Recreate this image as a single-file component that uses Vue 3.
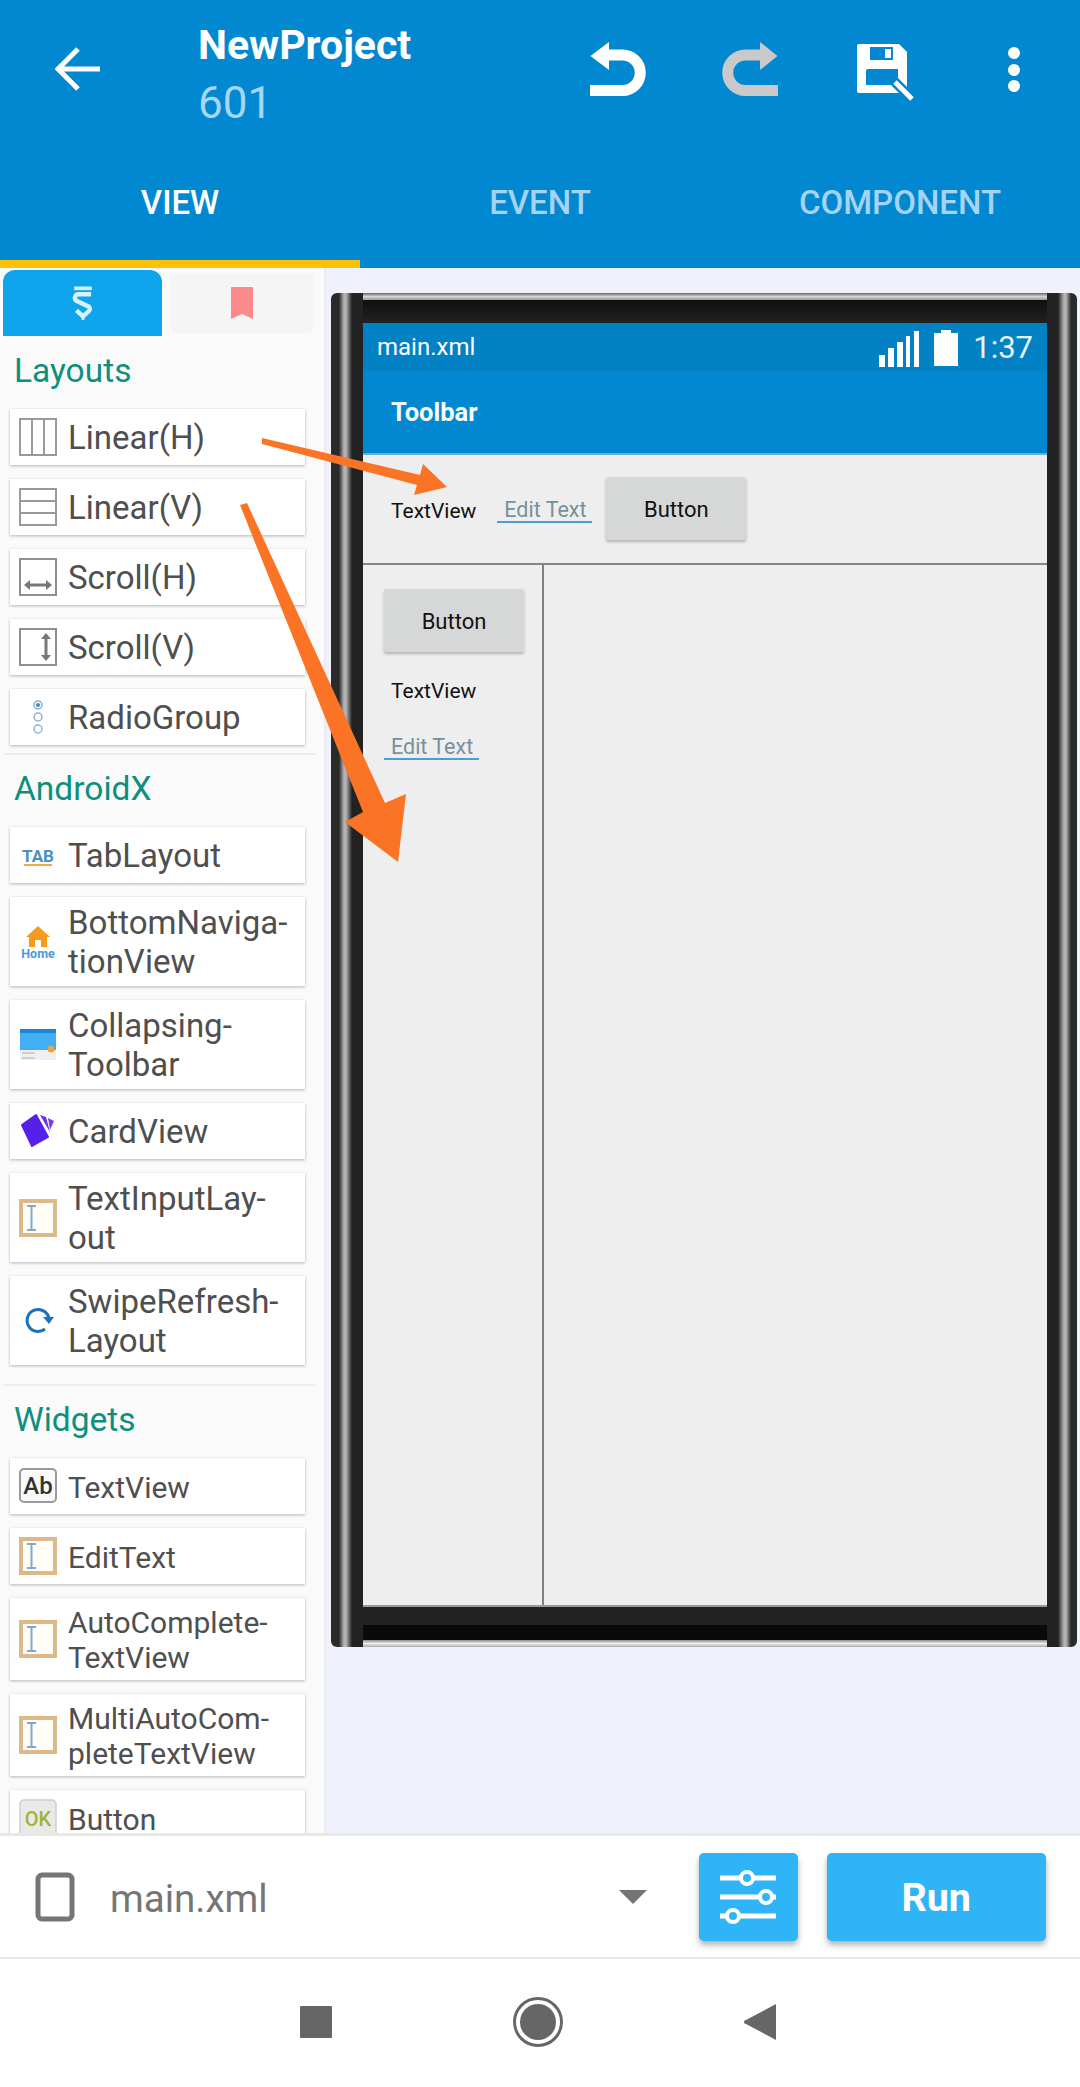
<script setup>
// palette sections, labels carry their own line break like the original hyphenation
const sections = [
  {
    title: 'Layouts',
    items: [
      { icon: 'linearh', lines: ['Linear(H)'] },
      { icon: 'linearv', lines: ['Linear(V)'] },
      { icon: 'scrollh', lines: ['Scroll(H)'] },
      { icon: 'scrollv', lines: ['Scroll(V)'] },
      { icon: 'radio', lines: ['RadioGroup'] },
    ],
  },
  {
    title: 'AndroidX',
    items: [
      { icon: 'tab', lines: ['TabLayout'] },
      { icon: 'home', lines: ['BottomNaviga-', 'tionView'] },
      { icon: 'collapse', lines: ['Collapsing-', 'Toolbar'] },
      { icon: 'card', lines: ['CardView'] },
      { icon: 'edit', lines: ['TextInputLay-', 'out'] },
      { icon: 'swipe', lines: ['SwipeRefresh-', 'Layout'] },
    ],
  },
  {
    title: 'Widgets',
    small: true,
    items: [
      { icon: 'text', lines: ['TextView'] },
      { icon: 'edit', lines: ['EditText'] },
      { icon: 'edit', lines: ['AutoComplete-', 'TextView'] },
      { icon: 'edit', lines: ['MultiAutoCom-', 'pleteTextView'] },
      { icon: 'ok', lines: ['Button'] },
    ],
  },
]

const tabs = ['VIEW', 'EVENT', 'COMPONENT']
</script>

<template>
  <div class="app">
    <header class="header">
      <div class="topbar">
        <svg class="back" width="46" height="46" viewBox="0 0 46 46">
          <path d="M45 23H3M23 3 3 23l20 20" fill="none" stroke="#fff" stroke-width="5" />
        </svg>
        <div class="title-block">
          <div class="title">NewProject</div>
          <div class="subtitle">601</div>
        </div>
        <div class="actions">
          <svg width="60" height="60" viewBox="18 10 60 60">
            <path d="M20 60.5H52.5A17.75 17.75 0 0 0 52.5 25H36" fill="none" stroke="#fff" stroke-width="11" />
            <path d="M20.5 26 39 12V40Z" fill="#fff" />
          </svg>
          <svg class="redo" width="60" height="60" viewBox="18 10 60 60">
            <path d="M76 60.5H43.5A17.75 17.75 0 0 1 43.5 25H60" fill="none" stroke="#c9c9c9" stroke-width="11" />
            <path d="M75.5 26 58 12V40Z" fill="#c9c9c9" />
          </svg>
          <svg class="save" width="62" height="62" viewBox="0 0 62 62">
            <path d="M3 1H43L51 9V48a2 2 0 0 1-2 2H3a2 2 0 0 1-2-2V3a2 2 0 0 1 2-2Z" fill="#fff" />
            <path d="M14 4H37V17H14Z" fill="#0288d1" />
            <path d="M29 6H35V15H29Z" fill="#fff" />
            <path d="M10 28a2 2 0 0 1 2-2H42V42H10Z" fill="#0288d1" />
            <path d="M36 36 60 60" stroke="#0288d1" stroke-width="10" />
            <path d="M39 39 56 56" stroke="#fff" stroke-width="5" />
          </svg>
          <div class="dots"><i></i><i></i><i></i></div>
        </div>
      </div>
      <nav class="tabs">
        <div v-for="(t, i) in tabs" :key="t" class="tab" :class="{ 'tab--on': i === 0 }">{{ t }}</div>
      </nav>
    </header>

    <main class="main">
      <aside class="palette">
        <div class="palette-tabs">
          <div class="ptab ptab--on">
            <svg width="22" height="38" viewBox="0 0 30 46">
              <path d="M3 3H27" stroke="#d4eefc" stroke-width="5" />
              <path d="M26 11H9a5 5 0 0 0-3 9L23 28a4 4 0 0 1 0 6L15 41 6 33" fill="none" stroke="#d9f0fd" stroke-width="6" />
              <path d="M15 46V40" stroke="#d9f0fd" stroke-width="4" />
            </svg>
          </div>
          <div class="ptab ptab--off">
            <svg width="24" height="32" viewBox="0 0 24 32">
              <path d="M2 0H22a1 1 0 0 1 1 1V32L12 27 1 32V1a1 1 0 0 1 1-1Z" fill="#fb8a8a" />
            </svg>
          </div>
        </div>

        <section
          v-for="(sec, si) in sections"
          :key="sec.title"
          class="section"
          :class="{ 'section--small': sec.small, 'section--divided': si > 0 }"
        >
          <h2 class="section-title">{{ sec.title }}</h2>
          <div class="items">
            <div v-for="item in sec.items" :key="item.lines[0]" class="item">
              <svg class="item-icon" width="38" height="38" viewBox="0 0 38 38">
                <template v-if="item.icon === 'linearh'">
                  <path d="M1 1H37V37H1ZM13 1V37M25 1V37" fill="none" stroke="#9a9a9a" stroke-width="2" />
                </template>
                <template v-else-if="item.icon === 'linearv'">
                  <path d="M1 1H37V37H1ZM1 13H37M1 25H37" fill="none" stroke="#9a9a9a" stroke-width="2" />
                </template>
                <template v-else-if="item.icon === 'scrollh'">
                  <path d="M1 1H37V37H1Z" fill="none" stroke="#8e8e8e" stroke-width="2" />
                  <path d="M7 27H31" stroke="#777" stroke-width="3" />
                  <path d="M5 27 11 22V32ZM33 27 27 22V32Z" fill="#777" />
                </template>
                <template v-else-if="item.icon === 'scrollv'">
                  <path d="M1 1H37V37H1Z" fill="none" stroke="#8e8e8e" stroke-width="2" />
                  <path d="M27 7V31" stroke="#777" stroke-width="3" />
                  <path d="M27 5 22 11H32ZM27 33 22 27H32Z" fill="#777" />
                </template>
                <template v-else-if="item.icon === 'radio'">
                  <circle cx="19" cy="7" r="4" fill="#fff" stroke="#7fb0d8" stroke-width="1.5" />
                  <circle cx="19" cy="7" r="2" fill="#3d85c6" />
                  <circle cx="19" cy="19" r="4" fill="none" stroke="#8bb4d4" stroke-width="1.5" />
                  <circle cx="19" cy="31" r="4" fill="none" stroke="#8bb4d4" stroke-width="1.5" />
                </template>
                <template v-else-if="item.icon === 'tab'">
                  <text x="19" y="26" text-anchor="middle" class="ic-tab">TAB</text>
                  <path d="M5 29H33" stroke="#f0a94f" stroke-width="2" />
                </template>
                <template v-else-if="item.icon === 'home'">
                  <path d="M19 3 31 14H28V24H22V17H16V24H10V14H7Z" fill="#f79a1e" />
                  <text x="19" y="35" text-anchor="middle" class="ic-home">Home</text>
                </template>
                <template v-else-if="item.icon === 'collapse'">
                  <rect x="1" y="3" width="36" height="4" fill="#1b87d4" />
                  <rect x="1" y="7" width="36" height="17" fill="#42aef5" />
                  <rect x="1" y="24" width="36" height="10" fill="#f0f0f0" />
                  <path d="M3 27H16M3 32H16" stroke="#c4c4c4" stroke-width="1.5" />
                  <circle cx="32" cy="23" r="3.5" fill="#e8a63c" />
                </template>
                <template v-else-if="item.icon === 'card'">
                  <path d="M29 6 35 9 31 18Z" fill="#7a3df0" />
                  <path d="M21 3 27 5 31 20Z" fill="#6a2fee" />
                  <path d="M3 13 17 3 29 25 13 34Z" fill="#5521ea" stroke="#5521ea" stroke-width="2" stroke-linejoin="round" />
                </template>
                <template v-else-if="item.icon === 'edit'">
                  <rect x="2" y="2" width="34" height="34" fill="#fffdf6" stroke="#dcb98a" stroke-width="4" />
                  <path d="M8 7H17M12.5 7V31M8 31H17" fill="none" stroke="#7fa9c9" stroke-width="2" />
                </template>
                <template v-else-if="item.icon === 'swipe'">
                  <path d="M30 17A11 11 0 1 0 26 27" fill="none" stroke="#1e71bf" stroke-width="3" />
                  <path d="M24 15H35L30 22Z" fill="#1e71bf" />
                </template>
                <template v-else-if="item.icon === 'text'">
                  <rect x="1" y="2" width="36" height="33" rx="4" fill="#fafafa" stroke="#9a9a9a" stroke-width="2" />
                  <text x="19" y="27" text-anchor="middle" class="ic-ab">Ab</text>
                </template>
                <template v-else-if="item.icon === 'ok'">
                  <rect x="1" y="1" width="36" height="36" rx="4" fill="#e9e9e6" stroke="#cfcfcf" stroke-width="1.5" />
                  <text x="19" y="27" text-anchor="middle" class="ic-ok">OK</text>
                </template>
              </svg>
              <div class="item-label">
                <div v-for="l in item.lines" :key="l">{{ l }}</div>
              </div>
            </div>
          </div>
        </section>
      </aside>

      <div class="preview">
        <div class="phone">
          <div class="screen">
            <div class="status">
              <span class="status-name">main.xml</span>
              <svg class="signal" width="40" height="36" viewBox="0 0 40 36">
                <path d="M0 24H6V36H0ZM9 17H15V36H9ZM18 11H24V36H18ZM27 5H31V36H27ZM35 0H40V36H35Z" fill="#fff" />
              </svg>
              <svg class="battery" width="24" height="36" viewBox="0 0 24 36">
                <path d="M7 0H17V3H24V36H0V3H7Z" fill="#fff" />
              </svg>
              <span class="clock">1:37</span>
            </div>
            <div class="toolbar">Toolbar</div>
            <div class="hrow">
              <span class="tv">TextView</span>
              <span class="et">Edit Text</span>
              <span class="btn">Button</span>
            </div>
            <div class="body">
              <div class="vcol">
                <span class="btn">Button</span>
                <span class="tv">TextView</span>
                <span class="et">Edit Text</span>
              </div>
            </div>
          </div>
        </div>
      </div>
    </main>

    <div class="bottom">
      <svg class="device" width="40" height="50" viewBox="0 0 40 50">
        <rect x="3" y="3" width="34" height="44" rx="4" fill="none" stroke="#757575" stroke-width="5" />
      </svg>
      <span class="file">main.xml</span>
      <svg class="caret" width="28" height="14" viewBox="0 0 28 14"><path d="M0 0H28L14 14Z" fill="#757575" /></svg>
      <div class="square-btn">
        <svg width="56" height="56" viewBox="0 0 56 56">
          <path d="M0 9H56M0 28H56M0 47H56" stroke="#fff" stroke-width="5" />
          <circle cx="27" cy="9" r="6" fill="#2fb5f7" stroke="#fff" stroke-width="4" />
          <circle cx="46" cy="28" r="6" fill="#2fb5f7" stroke="#fff" stroke-width="4" />
          <circle cx="13" cy="47" r="6" fill="#2fb5f7" stroke="#fff" stroke-width="4" />
        </svg>
      </div>
      <div class="run">Run</div>
    </div>

    <div class="navbar">
      <svg width="32" height="32" viewBox="0 0 32 32"><rect width="32" height="32" rx="1" fill="#666" /></svg>
      <svg width="50" height="50" viewBox="0 0 50 50">
        <circle cx="25" cy="25" r="23.5" fill="none" stroke="#666" stroke-width="3" />
        <circle cx="25" cy="25" r="18" fill="#666" />
      </svg>
      <svg width="32" height="36" viewBox="0 0 32 36"><path d="M32 0V36L2 20a2 2 0 0 1 0-4Z" fill="#666" /></svg>
    </div>

    <!-- annotation arrows drawn over the whole screenshot -->
    <svg class="arrows" width="1080" height="2087" viewBox="0 0 1080 2087">
      <path d="M262 438 262 444 417 485 414 495 447 487 423 464 420 475Z" fill="#fb7325" />
      <path d="M240 505 247 503 385 803 406 794 398 862 345 822 363 812Z" fill="#fb7325" />
    </svg>
  </div>
</template>

<style scoped>
.app {
  position: relative;
  width: 1080px;
  height: 2087px;
  display: flex;
  flex-direction: column;
  overflow: hidden;
  background: #fff;
  font-family: Roboto, "Liberation Sans", sans-serif;
}

.header {
  flex: none;
  height: 268px;
  background: #0288d1;
  color: #fff;
  display: flex;
  flex-direction: column;
}
.topbar {
  height: 158px;
  display: flex;
  align-items: flex-start;
  padding-left: 55px;
}
.back {
  margin-top: 46px;
}
.title-block {
  margin-left: 97px;
  padding-top: 21px;
}
.title {
  font-size: 41px;
  font-weight: 700;
  line-height: 48px;
}
.subtitle {
  font-size: 44px;
  line-height: 50px;
  margin-top: 9px;
  color: #a5d6f5;
}
.actions {
  margin-left: auto;
  display: flex;
  align-items: flex-start;
  padding-top: 40px;
  padding-right: 60px;
}
.redo {
  margin-left: 72px;
}
.save {
  margin-left: 76px;
  margin-top: 3px;
}
.dots {
  margin-left: 90px;
  padding-top: 7px;
  display: flex;
  flex-direction: column;
  gap: 4.5px;
}
.dots i {
  display: block;
  width: 12px;
  height: 12px;
  border-radius: 50%;
  background: #fff;
}
.tabs {
  flex: 1;
  display: flex;
}
.tab {
  flex: 1;
  display: flex;
  align-items: center;
  justify-content: center;
  padding-bottom: 14px;
  font-size: 33px;
  font-weight: 500;
  color: #a5d3f3;
  border-bottom: 8px solid transparent;
}
.tab--on {
  color: #fff;
  border-bottom-color: #ffc107;
}

.main {
  flex: none;
  height: 1565px;
  display: flex;
  overflow: hidden;
}
.palette {
  flex: none;
  width: 324px;
  background: #fafafa;
  border-right: 2px solid #ececec;
  overflow: hidden;
}
.palette-tabs {
  display: flex;
  padding: 2px 0 0 3px;
  height: 68px;
  box-sizing: border-box;
}
.ptab {
  display: flex;
  align-items: center;
  justify-content: center;
}
.ptab--on {
  width: 159px;
  height: 66px;
  background: #0ea5ec;
  border-radius: 12px 12px 0 0;
}
.ptab--off {
  width: 144px;
  height: 60px;
  margin: 3px 0 0 8px;
  background: #f5f5f5;
  border-radius: 6px;
}
.section-title {
  margin: 0;
  height: 73px;
  padding-left: 14px;
  font-size: 33.5px;
  font-weight: 400;
  line-height: 70px;
  color: #0d8f80;
}
.section--divided {
  margin-top: 8px;
  border-top: 2px solid transparent;
  position: relative;
}
.section--divided::before {
  content: "";
  position: absolute;
  top: -2px;
  left: 3px;
  right: 8px;
  height: 2px;
  background: #eeeeee;
}
.section--divided .section-title {
  height: 72px;
  line-height: 68px;
}
.section--small {
  margin-top: 19px;
}
.items {
  display: flex;
  flex-direction: column;
  gap: 14px;
}
.item {
  width: 295px;
  min-height: 56px;
  margin-left: 10px;
  padding: 7px 0 5px;
  box-sizing: border-box;
  display: flex;
  align-items: center;
  gap: 11px;
  background: #fff;
  box-shadow: 0 1px 3px rgba(0, 0, 0, 0.28);
}
.item-icon {
  flex: none;
  margin-left: 9px;
  margin-top: -2px;
}
.item-label {
  font-size: 33px;
  line-height: 38.5px;
  color: #4f4f4f;
}
.section--small .item-label {
  font-size: 30px;
  line-height: 35px;
}
.ic-tab {
  font-size: 17px;
  font-weight: 700;
  fill: #4b8fc0;
}
.ic-home {
  font-size: 12.5px;
  font-weight: 700;
  fill: #4a9ad4;
}
.ic-ab {
  font-size: 24px;
  font-weight: 500;
  fill: #333;
}
.ic-ok {
  font-size: 20px;
  font-weight: 500;
  fill: #9bb53c;
}

.preview {
  flex: 1;
  background: #eff1fd;
  padding: 25px 0 0 5px;
}
.phone {
  width: 746px;
  height: 1354px;
  box-sizing: border-box;
  padding: 30px 30px 40px 32px;
  background:
    linear-gradient(90deg, #2a2a2a 0, #2a2a2a 8px, #b4b4b4 13px, #b4b4b4 15px, #222 21px) left / 32px 100% no-repeat,
    linear-gradient(270deg, #2a2a2a 0, #2a2a2a 6px, #b4b4b4 11px, #b4b4b4 13px, #222 19px) right / 30px 100% no-repeat,
    linear-gradient(#666, #d4d4d4 50%, #999) top / 100% 7px no-repeat,
    linear-gradient(#8a8a8a, #eee 50%, #aaa) bottom / 100% 7px no-repeat,
    linear-gradient(#0a0a0a, #0a0a0a) bottom / 100% 22px no-repeat,
    linear-gradient(#0a0a0a, #222) top / 100% 30px no-repeat,
    #222;
  border-radius: 6px;
}
.screen {
  height: 100%;
  display: flex;
  flex-direction: column;
  background: #eeeeee;
}
.status {
  flex: none;
  height: 48px;
  display: flex;
  align-items: center;
  padding: 0 14px;
  background: #0282c4;
  color: #fff;
}
.status-name {
  font-size: 24px;
  margin-right: auto;
}
.signal {
  margin-top: 4px;
}
.battery {
  margin-left: 15px;
  margin-top: 2px;
}
.clock {
  margin-left: 15px;
  font-size: 31px;
  color: #e8f4fb;
}
.toolbar {
  flex: none;
  height: 84px;
  display: flex;
  align-items: center;
  padding-left: 28px;
  box-sizing: border-box;
  border-bottom: 2px solid #6aaed6;
  background: #0288d1;
  color: #f4fbff;
  font-size: 25.5px;
  font-weight: 700;
}
.hrow {
  flex: none;
  height: 110px;
  box-sizing: border-box;
  padding: 22px 0 0 28px;
  display: flex;
  align-items: flex-start;
  border-bottom: 2px solid #858585;
}
.tv {
  font-size: 21px;
  line-height: 26px;
  color: #111;
}
.et {
  display: block;
  width: 95px;
  box-sizing: border-box;
  padding: 0 7px;
  border-bottom: 2px solid #4a9fcf;
  font-size: 21.5px;
  line-height: 22px;
  white-space: nowrap;
  color: #78909c;
}
.btn {
  display: flex;
  align-items: center;
  justify-content: center;
  width: 140px;
  height: 63px;
  padding-top: 1px;
  box-sizing: border-box;
  background: #d6d7d7;
  border-radius: 2px;
  box-shadow: 0 2px 3px rgba(0, 0, 0, 0.25);
  font-size: 22px;
  color: #111;
}
.hrow .tv {
  margin-top: 21px;
}
.hrow .et {
  margin: 22px 14px 0 21px;
}
.body {
  flex: 1;
  border-bottom: 2px solid #9a9a9a;
  display: flex;
}
.vcol {
  width: 181px;
  box-sizing: border-box;
  padding: 24px 0 0 21px;
  border-right: 2px solid #808080;
  display: flex;
  flex-direction: column;
  align-items: flex-start;
}
.vcol .tv {
  margin: 26px 0 0 7px;
}
.vcol .et {
  margin-top: 32px;
}

.bottom {
  flex: none;
  height: 126px;
  box-sizing: border-box;
  border-top: 3px solid #e8e8e8;
  border-bottom: 2px solid #e8e8e8;
  display: flex;
  align-items: center;
  padding-left: 35px;
}
.file {
  margin-left: 35px;
  padding-top: 3px;
  font-size: 38.5px;
  color: #757575;
}
.caret {
  margin-left: 351px;
}
.square-btn {
  margin-left: 52px;
  width: 99px;
  height: 88px;
  display: flex;
  align-items: center;
  justify-content: center;
  background: #2fb5f7;
  border-radius: 5px;
  box-shadow: 0 4px 6px rgba(0, 0, 0, 0.3);
}
.run {
  margin-left: 29px;
  width: 219px;
  height: 88px;
  display: flex;
  align-items: center;
  justify-content: center;
  padding-top: 2px;
  box-sizing: border-box;
  background: #2fb5f7;
  border-radius: 5px;
  box-shadow: 0 4px 6px rgba(0, 0, 0, 0.3);
  color: #fff;
  font-size: 39.5px;
  font-weight: 700;
}
.navbar {
  flex: 1;
  display: flex;
  align-items: center;
  padding: 0 304px 2px 300px;
  justify-content: space-between;
}
.arrows {
  position: absolute;
  inset: 0;
  pointer-events: none;
}
</style>
